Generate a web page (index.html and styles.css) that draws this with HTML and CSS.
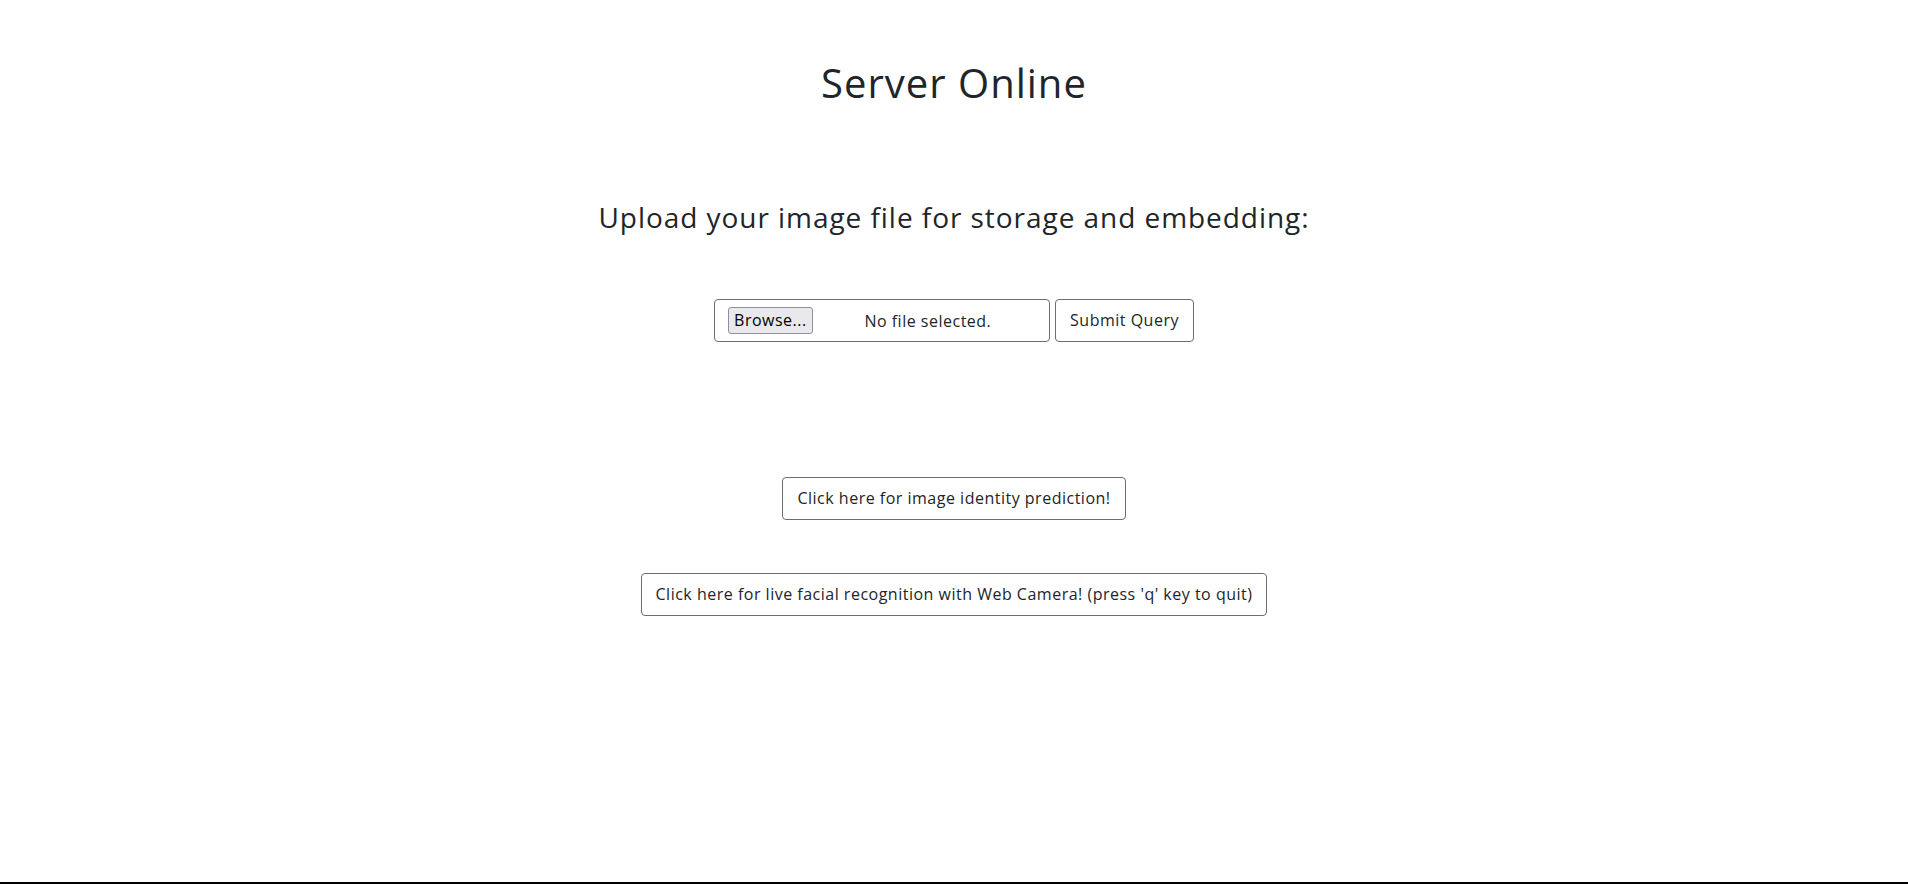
FILE: index.html
```html
<!DOCTYPE html>
<html lang="en">
<head>
<meta charset="utf-8">
<title>Server Online</title>
<link rel="stylesheet" href="styles.css">
</head>
<body>
<main class="page">
  <h1 class="title">Server Online</h1>
  <h3 class="subtitle">Upload your image file for storage and embedding:</h3>
  <form class="upload-form">
    <div class="file-input">
      <span class="browse-btn">Browse...</span>
      <span class="file-label">No file selected.</span>
    </div>
    <button type="button" class="btn">Submit Query</button>
  </form>
  <button type="button" class="btn btn-predict">Click here for image identity prediction!</button>
  <button type="button" class="btn btn-live">Click here for live facial recognition with Web Camera! (press 'q' key to quit)</button>
</main>
<div class="bottom-rule"></div>
</body>
</html>
```

FILE: styles.css
```css
html, body {
  margin: 0;
  padding: 0;
  background: #ffffff;
}

body {
  min-height: 100vh;
  display: flex;
  flex-direction: column;
  font-family: "Open Sans", "Noto Sans", sans-serif;
  color: #212529;
  box-sizing: border-box;
}

.page {
  display: flex;
  flex-direction: column;
  align-items: center;
  padding-top: 59px;
}

.title {
  margin: 0;
  font-size: 40px;
  font-weight: 400;
  line-height: 48px;
  letter-spacing: 1px;
}

.subtitle {
  margin: 93px 0 0;
  font-size: 28px;
  font-weight: 400;
  line-height: 34px;
  letter-spacing: 0.95px;
}

.upload-form {
  margin-top: 65px;
  display: flex;
  gap: 5px;
  align-items: center;
}

.file-input {
  width: 336px;
  height: 43px;
  box-sizing: border-box;
  border: 1px solid #6e6e6e;
  border-radius: 4px;
  display: flex;
  align-items: center;
  padding-left: 13px;
}

.browse-btn {
  background: #e9e9ed;
  border: 1px solid #8f8f9d;
  border-radius: 3px;
  font-size: 16px;
  line-height: 25px;
  padding: 0 5px;
  color: #000;
  letter-spacing: 0.5px;
}

.file-label {
  flex: 1;
  text-align: center;
  font-size: 16px;
  color: #212529;
  letter-spacing: 0.5px;
  padding-right: 6px;
}

.btn {
  font-family: inherit;
  font-size: 16px;
  line-height: 25px;
  letter-spacing: 0.5px;
  color: #212529;
  background: #ffffff;
  border: 1px solid #6e6e6e;
  border-radius: 4px;
  padding: 8px 14px;
  height: 43px;
  box-sizing: border-box;
}

.btn-predict {
  margin-top: 135px;
}

.btn-live {
  margin-top: 53px;
}

.bottom-rule {
  margin-top: auto;
  height: 2px;
  background: #000;
}
```
